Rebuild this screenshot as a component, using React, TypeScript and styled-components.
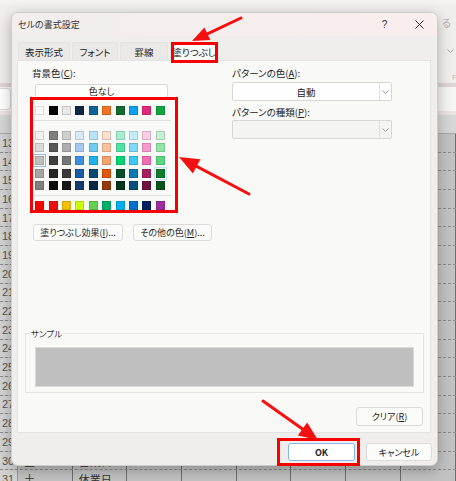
import React from 'react';
import styled, { createGlobalStyle } from 'styled-components';

const GlobalStyle = createGlobalStyle`
  html, body {
    margin: 0;
    padding: 0;
  }
  body {
    width: 456px;
    height: 481px;
    overflow: hidden;
    font-family: "Noto Sans CJK JP", "Noto Sans", sans-serif;
    font-feature-settings: "palt";
    color: #222;
  }
`;

// パレットの色（テーマ色・標準色）
const topRow = ['#ffffff', '#000000', '#e8e8e8', '#0e2841', '#0f6394', '#f07222', '#116a2e', '#0ea0ea', '#e2297c', '#12a43e'];
const themeRows = [
  ['#f2f2f2', '#808080', '#d0d0d0', '#d9e9f9', '#b8e4f9', '#fde0cf', '#a6edcf', '#c5ecfc', '#fbcde5', '#c9f0d5'],
  ['#d9d9d9', '#595959', '#aeaeae', '#a3c8f0', '#6fcbf3', '#fbc29b', '#4fe3a2', '#7fd9fb', '#f799cc', '#93e6a8'],
  ['#bfbfbf', '#404040', '#767676', '#3f8fe3', '#1fb1f0', '#f8a26f', '#00d571', '#3fc8fa', '#f46cb4', '#5cd77f'],
  ['#a6a6a6', '#262626', '#3a3a3a', '#1a5ca6', '#064a73', '#e0560c', '#01502a', '#0878b2', '#a81c62', '#117a2c'],
  ['#808080', '#0d0d0d', '#171717', '#123d6e', '#032b44', '#953a08', '#013618', '#05507a', '#6e1240', '#0b5220'],
];
const standardRow = ['#ff0000', '#f20d0d', '#f5c000', '#ccff00', '#63d04f', '#00b06c', '#00b0f5', '#0070d0', '#002060', '#9b2fa0'];

const rowNumbers = Array.from({ length: 19 }, (_, i) => 13 + i);
const cellText: Record<number, string[]> = {
  30: ['金', '営業日'],
  31: ['土', '休業日'],
};

const Arrow = ({ x1, y1, x2, y2, head = 16, half = 7 }: { x1: number; y1: number; x2: number; y2: number; head?: number; half?: number }) => {
  const len = Math.hypot(x2 - x1, y2 - y1);
  const ux = (x2 - x1) / len;
  const uy = (y2 - y1) / len;
  const bx = x2 - ux * head;
  const by = y2 - uy * head;
  const px = -uy * half;
  const py = ux * half;
  return (
    <g>
      <line x1={x1} y1={y1} x2={bx} y2={by} stroke="#f41010" strokeWidth={3} strokeLinecap="round" />
      <polygon points={`${x2},${y2} ${bx + px},${by + py} ${bx - px},${by - py}`} fill="#f41010" />
    </g>
  );
};

const Chevron = () => (
  <svg width="7" height="4" viewBox="0 0 7 4">
    <polyline points="0.5,0.5 3.5,3.5 6.5,0.5" fill="none" stroke="#9a9a9a" strokeWidth="0.9" />
  </svg>
);

const App = () => {
  return (
    <Stage>
      <GlobalStyle />
      <Sheet>
        <Ribbon>
          <RibbonSide>
            <RibbonText>る</RibbonText>
            <RibbonChevron>
              <Chevron />
            </RibbonChevron>
            <RibbonLetter>F</RibbonLetter>
          </RibbonSide>
        </Ribbon>
        <FormulaBar>
          <NameBox />
        </FormulaBar>
        <ColumnHeader />
        {rowNumbers.map((n) => (
          <SheetRow key={n}>
            <RowNum>{n}</RowNum>
            {Array.from({ length: 8 }, (_, c) => (
              <Cell key={c}>{cellText[n]?.[c] ?? ''}</Cell>
            ))}
          </SheetRow>
        ))}
      </Sheet>

      <Dialog>
        <TitleBar>
          <Title>セルの書式設定</Title>
          <TitleButton>?</TitleButton>
          <TitleButton>
            <svg width="9" height="9" viewBox="0 0 9 9">
              <path d="M0.5 0.5 L8.5 8.5 M8.5 0.5 L0.5 8.5" stroke="#333" strokeWidth="1" />
            </svg>
          </TitleButton>
        </TitleBar>

        <TabStrip>
          <Tab $w={52}>表示形式</Tab>
          <Tab $w={46}>フォント</Tab>
          <Tab $w={48}>罫線</Tab>
          <Tab $w={48} $active>
            塗りつぶし
          </Tab>
        </TabStrip>

        <Panel>
          <TopSection>
            <LeftCol>
              <Label>
                背景色(<u>C</u>):
              </Label>
              <NoColorButton>色なし</NoColorButton>
              <Palette>
                <SwatchRow>
                  {topRow.map((c, i) => (
                    <Swatch key={i} $color={c} />
                  ))}
                </SwatchRow>
                <PaletteDivider />
                <ThemeGrid>
                  {themeRows.map((row, r) =>
                    row.map((c, i) => (
                      <Swatch
                        key={`${r}-${i}`}
                        $color={c}
                        $ring={r === 2 && i === 0 ? '#8fbeec' : r === 3 && i === 9 ? '#cfe2f6' : undefined}
                      />
                    ))
                  )}
                </ThemeGrid>
                <PaletteDivider />
                <SwatchRow>
                  {standardRow.map((c, i) => (
                    <Swatch key={i} $color={c} />
                  ))}
                </SwatchRow>
              </Palette>
              <ButtonRow>
                <PushButton $w={90} $h={17}>
                  塗りつぶし効果(<u>I</u>)...
                </PushButton>
                <PushButton $w={79} $h={17}>
                  その他の色(<u>M</u>)...
                </PushButton>
              </ButtonRow>
            </LeftCol>

            <RightCol>
              <Label>
                パターンの色(<u>A</u>):
              </Label>
              <Dropdown $top={3}>
                <DropValue>自動</DropValue>
                <DropArrow>
                  <Chevron />
                </DropArrow>
              </Dropdown>
              <Label $top={5}>
                パターンの種類(<u>P</u>):
              </Label>
              <Dropdown $top={2} $disabled>
                <DropValue />
                <DropArrow>
                  <Chevron />
                </DropArrow>
              </Dropdown>
            </RightCol>
          </TopSection>

          <Spacer />

          <SampleGroup>
            <SampleLegend>サンプル</SampleLegend>
            <SampleBox />
          </SampleGroup>

          <ClearRow>
            <PushButton $w={67} $h={19}>
              クリア(<u>R</u>)
            </PushButton>
          </ClearRow>
        </Panel>

        <Footer>
          <PushButton $w={67} $h={18} $primary>
            OK
          </PushButton>
          <PushButton $w={66} $h={18}>
            キャンセル
          </PushButton>
        </Footer>
      </Dialog>

      <Highlight $x={171} $y={42} $w={47} $h={21} />
      <Highlight $x={30} $y={97} $w={148} $h={116} />
      <Highlight $x={277} $y={438} $w={83} $h={28} />

      <ArrowLayer width="456" height="481" viewBox="0 0 456 481">
        <Arrow x1={241} y1={18} x2={192} y2={41} head={17} half={7} />
        <Arrow x1={249} y1={194} x2={179} y2={157} head={20} half={8} />
        <Arrow x1={263} y1={401} x2={318} y2={440} head={19} half={8} />
      </ArrowLayer>
    </Stage>
  );
};

const Stage = styled.div`
  position: relative;
  width: 456px;
  height: 481px;
  overflow: hidden;
  background: #c2c2c2;
`;

const Sheet = styled.div`
  display: flex;
  flex-direction: column;
  height: 100%;
`;

const Ribbon = styled.div`
  height: 83px;
  flex-shrink: 0;
  display: flex;
  justify-content: flex-end;
  background: linear-gradient(180deg, #f4f3f1 0, #efeeec 8px);
`;

const RibbonSide = styled.div`
  width: 18px;
  display: flex;
  flex-direction: column;
`;

const RibbonText = styled.div`
  margin: 17px 0 0 4px;
  font-size: 10px;
  line-height: 12px;
  color: #b0b0b0;
`;

const RibbonChevron = styled.div`
  margin: 17px 0 0 9px;
  line-height: 0;
`;

const RibbonLetter = styled.div`
  margin: 20px 0 0 14px;
  font: 8px "Liberation Sans", sans-serif;
  color: #bbb;
`;

const FormulaBar = styled.div`
  height: 32px;
  flex-shrink: 0;
  box-sizing: border-box;
  border-top: 4px solid #ddd4d4;
  border-bottom: 4px solid #ebe3e3;
  background: #f5f5f4;
  display: flex;
  align-items: center;
`;

const NameBox = styled.div`
  width: 10px;
  height: 20px;
  background: #ffffff;
  border: 1px solid #d8d8d8;
  border-left: none;
  border-radius: 0 4px 4px 0;
`;

const ColumnHeader = styled.div`
  height: 18px;
  flex-shrink: 0;
  background: #d6d6d6;
  border-bottom: 1px solid #a8a8a8;
`;

const SheetRow = styled.div`
  display: flex;
  height: 18.7px;
  flex-shrink: 0;
  box-sizing: border-box;
  border-bottom: 1px dashed #8a8a8a;
`;

const RowNum = styled.div`
  width: 18px;
  flex-shrink: 0;
  box-sizing: border-box;
  padding-left: 2px;
  display: flex;
  align-items: center;
  background: #d2d2d2;
  border-right: 1px solid #9a9a9a;
  font: 11px "Liberation Sans", sans-serif;
  color: #555;
`;

const Cell = styled.div`
  width: 54.7px;
  flex-shrink: 0;
  box-sizing: border-box;
  padding-left: 6px;
  display: flex;
  align-items: center;
  border-right: 1px solid #6e6e6e;
  font-size: 11px;
  color: #333;
  white-space: nowrap;
  overflow: hidden;
`;

const Dialog = styled.div`
  position: absolute;
  left: 11px;
  top: 12px;
  width: 427px;
  height: 454px;
  box-sizing: border-box;
  border: 1px solid #cdcdcd;
  border-radius: 7px;
  background: #efeeec;
  box-shadow: 0 4px 14px rgba(0, 0, 0, 0.28);
  display: flex;
  flex-direction: column;
  overflow: hidden;
`;

const TitleBar = styled.div`
  height: 23px;
  flex-shrink: 0;
  display: flex;
  align-items: center;
  padding-left: 6px;
  background: linear-gradient(90deg, #f2eeee, #f8eeed);
`;

const Title = styled.div`
  flex: 1;
  font-size: 9px;
  color: #333;
`;

const TitleButton = styled.div`
  width: 35px;
  height: 23px;
  display: flex;
  align-items: center;
  justify-content: center;
  font: 10px "Liberation Sans", sans-serif;
  color: #333;
`;

const TabStrip = styled.div`
  height: 24px;
  flex-shrink: 0;
  box-sizing: border-box;
  display: flex;
  gap: 2px;
  padding: 6px 0 0 6px;
`;

const Tab = styled.div<{ $w: number; $active?: boolean }>`
  width: ${(p) => p.$w}px;
  height: 18px;
  box-sizing: border-box;
  display: flex;
  align-items: center;
  justify-content: center;
  font-size: 9.5px;
  color: #222;
  border: 1px solid ${(p) => (p.$active ? '#e2e2e0' : '#e4e3e1')};
  border-bottom: none;
  border-radius: 2px 2px 0 0;
  background: ${(p) => (p.$active ? '#f9f9f7' : '#eae9e7')};
`;

const Panel = styled.div`
  margin-left: 5px;
  width: 414px;
  height: 373px;
  flex-shrink: 0;
  box-sizing: border-box;
  border: 1px solid #e3e3e1;
  background: #f9f9f7;
  display: flex;
  flex-direction: column;
`;

const TopSection = styled.div`
  display: flex;
  padding: 6px 0 0 14px;
`;

const LeftCol = styled.div`
  width: 200px;
  display: flex;
  flex-direction: column;
`;

const RightCol = styled.div`
  display: flex;
  flex-direction: column;
`;

const Label = styled.div<{ $top?: number }>`
  margin-top: ${(p) => p.$top ?? 0}px;
  height: 12px;
  line-height: 12px;
  font-size: 9.5px;
  color: #222;
  white-space: nowrap;
`;

const NoColorButton = styled.div`
  margin: 5px 0 0 3px;
  width: 133px;
  height: 15px;
  box-sizing: border-box;
  border: 1px solid #d9d9d9;
  border-radius: 2px;
  background: #fdfdfc;
  text-align: center;
  line-height: 13px;
  font-size: 9px;
`;

const Palette = styled.div`
  margin: 7px 0 0 3.3px;
  display: flex;
  flex-direction: column;
`;

const SwatchRow = styled.div`
  display: grid;
  grid-template-columns: repeat(10, 9px);
  column-gap: 4.4px;
`;

const ThemeGrid = styled(SwatchRow)`
  margin-top: 5px;
  row-gap: 3.65px;
`;

const PaletteDivider = styled.div`
  margin: 4.6px 0 5px -3.3px;
  width: 139px;
  height: 1px;
  background: #dfdfdd;
`;

const Swatch = styled.div<{ $color: string; $ring?: string }>`
  width: 9px;
  height: 9px;
  box-sizing: border-box;
  background: ${(p) => p.$color};
  border: 1px solid rgba(0, 0, 0, 0.14);
  outline: ${(p) => (p.$ring ? `1px solid ${p.$ring}` : 'none')};
  outline-offset: 1px;
`;

const ButtonRow = styled.div`
  margin: 14.4px 0 0 1px;
  display: flex;
  gap: 10px;
`;

const PushButton = styled.div<{ $w: number; $h: number; $primary?: boolean }>`
  width: ${(p) => p.$w}px;
  height: ${(p) => p.$h}px;
  box-sizing: border-box;
  display: flex;
  align-items: center;
  justify-content: center;
  border: 1px solid ${(p) => (p.$primary ? '#86b6e6' : '#dbdbd9')};
  border-radius: 3px;
  background: ${(p) => (p.$primary ? '#ffffff' : '#fbfbfa')};
  font-size: 9px;
  font-weight: ${(p) => (p.$primary ? 600 : 400)};
  color: #222;
  white-space: nowrap;
`;

const Dropdown = styled.div<{ $top: number; $disabled?: boolean }>`
  margin-top: ${(p) => p.$top}px;
  width: 160px;
  height: 19px;
  box-sizing: border-box;
  display: flex;
  border: 1px solid #d7d7d5;
  border-radius: 2px;
  background: ${(p) => (p.$disabled ? '#f4f4f2' : '#fefefe')};
`;

const DropValue = styled.div`
  flex: 1;
  display: flex;
  align-items: center;
  justify-content: center;
  font-size: 9.5px;
`;

const DropArrow = styled.div`
  width: 11px;
  display: flex;
  align-items: center;
  justify-content: center;
  border-left: 1px solid #e2e2e0;
`;

const Spacer = styled.div`
  flex: 1;
`;

const SampleGroup = styled.div`
  position: relative;
  margin: 0 6px 0 7px;
  box-sizing: border-box;
  border: 1px solid #e5e5e3;
  padding: 13px 9px 5px 9px;
`;

const SampleLegend = styled.div`
  position: absolute;
  left: 4px;
  top: -6px;
  padding: 0 1px;
  background: #f9f9f7;
  font-size: 8.5px;
  line-height: 10px;
  color: #333;
`;

const SampleBox = styled.div`
  height: 40px;
  box-sizing: border-box;
  background: #bfbfbf;
  border: 1px solid #d9d9d9;
`;

const ClearRow = styled.div`
  display: flex;
  justify-content: flex-end;
  margin: 14px 7px 6px 0;
`;

const Footer = styled.div`
  display: flex;
  justify-content: flex-end;
  gap: 11px;
  padding: 10px 5px 0 0;
`;

const Highlight = styled.div<{ $x: number; $y: number; $w: number; $h: number }>`
  position: absolute;
  left: ${(p) => p.$x}px;
  top: ${(p) => p.$y}px;
  width: ${(p) => p.$w}px;
  height: ${(p) => p.$h}px;
  box-sizing: border-box;
  border: 3px solid #f80000;
  pointer-events: none;
`;

const ArrowLayer = styled.svg`
  position: absolute;
  left: 0;
  top: 0;
  pointer-events: none;
`;

export default App;
